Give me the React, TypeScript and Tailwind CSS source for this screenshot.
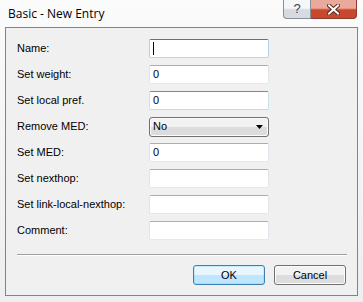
import React from "react";

type Row = { label: string; value?: string; kind?: "text" | "select"; state?: "focus" | "hover" };

const rows: Row[] = [
  { label: "Name:", value: "", state: "focus" },
  { label: "Set weight:", value: "0" },
  { label: "Set local pref.", value: "0", state: "hover" },
  { label: "Remove MED:", value: "No", kind: "select" },
  { label: "Set MED:", value: "0" },
  { label: "Set nexthop:", value: "" },
  { label: "Set link-local-nexthop:", value: "" },
  { label: "Comment:", value: "" },
];

function TextBox({ value, state }: { value?: string; state?: "focus" | "hover" }) {
  const border =
    state === "focus"
      ? "border-t-[#3d7bad] border-x-[#b5cfe7] border-b-[#b7d9ed]"
      : state === "hover"
        ? "border-t-[#5794bf] border-x-[#c7e2f1] border-b-[#c5daed]"
        : "border-t-[#abadb3] border-x-[#e2e3ea] border-b-[#e3e9ef]";
  return (
    <div className={`flex h-[19px] w-[120px] items-center rounded-[2px] border bg-white pl-[3px] ${border}`}>
      {state === "focus" && <span className="h-[13px] w-px bg-black" />}
      <span>{value}</span>
    </div>
  );
}

function Select({ value }: { value?: string }) {
  return (
    <div className="flex h-[20px] w-[120px] items-center justify-between rounded-[3px] border border-[#707070] bg-gradient-to-b from-[#f2f2f2] from-50% to-[#dcdcdc] to-50% pl-[3px] pr-[5px] shadow-[inset_0_0_0_1px_#fcfcfc]">
      <span>{value}</span>
      <svg width="7" height="4" viewBox="0 0 7 4">
        <path d="M0 0h7L3.5 4z" fill="#000" />
      </svg>
    </div>
  );
}

export default function App() {
  return (
    <div
      className="flex h-[302px] w-[363px] flex-col bg-gradient-to-b from-[#fbfbfb] to-[#eceef0] text-[11px] text-black"
      style={{ fontFamily: "'Liberation Sans', Arial, sans-serif" }}
    >
      {/* Title bar */}
      <div className="flex h-[27px] items-start justify-between pl-[8px] pr-[6px]">
        <div className="pt-[5px] text-[12px]" style={{ fontFamily: "'Open Sans', 'Noto Sans', sans-serif" }}>
          Basic - New Entry
        </div>
        <div className="flex">
          <div className="flex h-[19px] w-[28px] items-center justify-center rounded-bl-[4px] border border-t-0 border-[#8a8f97] bg-gradient-to-b from-[#f4f6f8] from-45% to-[#d6dbe1] to-55% text-[13px] text-[#3b4048]">
            ?
          </div>
          <div className="flex h-[19px] w-[46px] items-center justify-center rounded-br-[4px] border border-l-0 border-t-0 border-[#8b3a30] bg-gradient-to-b from-[#e9a99b] from-45% to-[#c9462f] to-55%">
            <svg width="13" height="11" viewBox="0 0 13 11">
              <path d="M2 1.5l9 8M11 1.5l-9 8" stroke="#5a2a22" strokeWidth="4" strokeLinecap="square" />
              <path d="M2 1.5l9 8M11 1.5l-9 8" stroke="#fff" strokeWidth="2" strokeLinecap="square" />
            </svg>
          </div>
        </div>
      </div>

      {/* Client area */}
      <div className="mx-[5px] flex h-[269px] flex-col border border-[#7f8489] bg-[#f0f0f0] px-[10px] pt-[11px]">
        <div className="flex flex-col gap-[7px] pl-px">
          {rows.map((r) => (
            <div key={r.label} className="flex h-[19px] items-center">
              <div className="w-[132px]">{r.label}</div>
              {r.kind === "select" ? <Select value={r.value} /> : <TextBox value={r.value} state={r.state} />}
            </div>
          ))}
        </div>

        <div className="mt-[14px] ml-px border-t border-[#a0a0a0] border-b border-b-white" />

        <div className="mt-[9px] flex justify-end gap-[9px] pr-px">
          <button className="h-[20px] w-[72px] rounded-[3px] border border-[#3c7fb1] bg-gradient-to-b from-[#eaf6fd] from-50% to-[#bee6fd] to-50% shadow-[inset_0_0_0_1px_#48d7fb40]">
            OK
          </button>
          <button className="h-[20px] w-[72px] rounded-[3px] border border-[#707070] bg-gradient-to-b from-[#f2f2f2] from-50% to-[#dddddd] to-50% shadow-[inset_0_0_0_1px_#fcfcfc]">
            Cancel
          </button>
        </div>
      </div>
    </div>
  );
}
